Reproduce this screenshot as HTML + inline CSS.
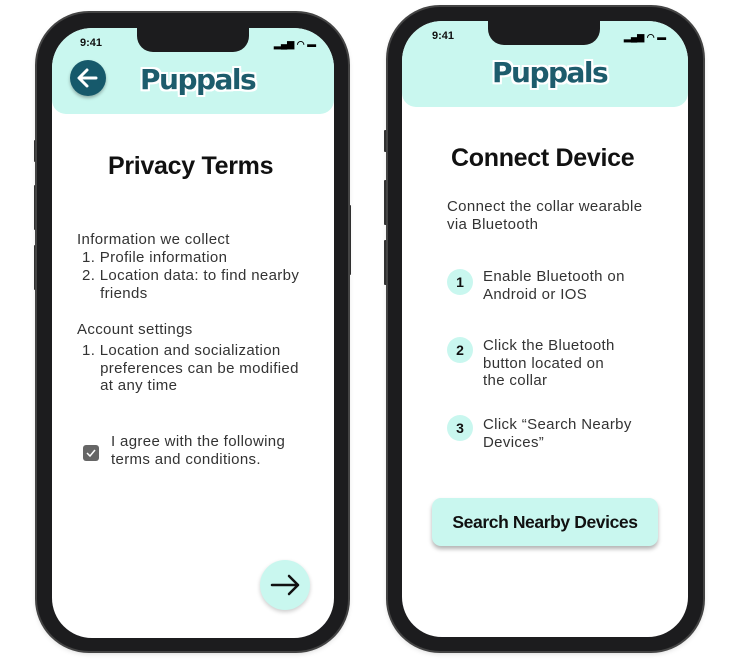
<!DOCTYPE html>
<html><head><style>
*{margin:0;padding:0;box-sizing:border-box}
body{width:738px;height:670px;background:#fff;position:relative;overflow:hidden;font-family:"Liberation Sans",sans-serif}
.ph{position:absolute;background:#1c1c1e;border-radius:52px;box-shadow:0 0 0 2px #444,0 2px 6px rgba(0,0,0,.2)}
.sc{position:absolute;background:#fff;border-radius:40px;overflow:hidden}
.hd{position:absolute;left:0;top:0;right:0;background:#c9f7ef;border-radius:0 0 14px 14px}
.notch{position:absolute;top:0;width:112px;height:24px;background:#1c1c1e;border-radius:0 0 16px 16px}
.time{position:absolute;font-size:11px;font-weight:bold;color:#111}
.logo{position:absolute;font-family:"DejaVu Sans",sans-serif;font-weight:bold;font-size:28px;color:#1d5c6c;letter-spacing:-1.5px;text-shadow:2px 0 #fff,-2px 0 #fff,0 2px #fff,0 -2px #fff,2px 2px #fff,-2px -2px #fff,2px -2px #fff,-2px 2px #fff}
.t{position:absolute;color:#333;font-size:15px;letter-spacing:.35px;line-height:17.5px;white-space:nowrap}
h1{position:absolute;font-family:"Liberation Sans",sans-serif;font-size:25px;font-weight:bold;color:#111;letter-spacing:-.3px}
.num{position:absolute;width:26px;height:26px;border-radius:50%;background:#c9f7ef;font-weight:bold;font-size:14px;text-align:center;line-height:26px;color:#111}
.side{position:absolute;background:#333;width:3px;border-radius:1px}
</style></head><body>
<div class="side" style="left:34px;top:140px;height:22px"></div>
<div class="side" style="left:34px;top:185px;height:45px"></div>
<div class="side" style="left:34px;top:245px;height:45px"></div>
<div class="side" style="left:348px;top:205px;height:70px"></div>
<div class="ph" style="left:37px;top:13px;width:311px;height:638px"></div>
<div class="sc" style="left:52px;top:28px;width:282px;height:610px">
 <div class="hd" style="height:86px"></div>
 <div class="notch" style="left:85px"></div>
 <div class="time" style="left:28px;top:9px">9:41</div>
 <div style="position:absolute;left:222px;top:11px;font-size:9px;font-weight:bold">▂▄▆ ◠ ▬</div>
 <div style="position:absolute;left:18px;top:32px;width:36px;height:36px;border-radius:50%;background:#16596b;box-shadow:0 2px 3px rgba(0,0,0,.3)">
  <svg width="36" height="36" viewBox="0 0 36 36"><path d="M26 18H10M17 10l-8 8 8 8" fill="none" stroke="#fff" stroke-width="3" stroke-linecap="round" stroke-linejoin="round"/></svg></div>
 <div class="logo" style="left:88px;top:35px">Puppals</div>
 <h1 style="left:56px;top:124px">Privacy Terms</h1>
 <div class="t" style="left:25px;top:203px">Information we collect</div>
 <div class="t" style="left:30px;top:221px">1. Profile information</div>
 <div class="t" style="left:30px;top:239px">2. Location data: to find nearby<br>&nbsp;&nbsp;&nbsp;&nbsp;friends</div>
 <div class="t" style="left:25px;top:293px">Account settings</div>
 <div class="t" style="left:30px;top:314px">1. Location and socialization<br>&nbsp;&nbsp;&nbsp;&nbsp;preferences can be modified<br>&nbsp;&nbsp;&nbsp;&nbsp;at any time</div>
 <div style="position:absolute;left:31px;top:417px;width:16px;height:16px;border-radius:3px;background:#666">
  <svg width="16" height="16"><path d="M4 8l3 3 5-6" fill="none" stroke="#fff" stroke-width="1.5"/></svg></div>
 <div class="t" style="left:59px;top:405px">I agree with the following<br>terms and conditions.</div>
 <div style="position:absolute;left:208px;top:532px;width:50px;height:50px;border-radius:50%;background:#c9f7ef;box-shadow:0 2px 4px rgba(0,0,0,.2)">
  <svg width="50" height="50"><path d="M12 25h26M29 16l9 9-9 9" fill="none" stroke="#111" stroke-width="2.5" stroke-linecap="round" stroke-linejoin="round"/></svg></div>
</div>
<div class="side" style="left:384px;top:130px;height:22px"></div>
<div class="side" style="left:384px;top:180px;height:45px"></div>
<div class="side" style="left:384px;top:240px;height:45px"></div>
<div class="side" style="left:702px;top:200px;height:70px"></div>
<div class="ph" style="left:388px;top:7px;width:315px;height:644px"></div>
<div class="sc" style="left:402px;top:21px;width:286px;height:616px">
 <div class="hd" style="height:86px"></div>
 <div class="notch" style="left:86px"></div>
 <div class="time" style="left:30px;top:9px">9:41</div>
 <div style="position:absolute;left:222px;top:11px;font-size:9px;font-weight:bold">▂▄▆ ◠ ▬</div>
 <div class="logo" style="left:90px;top:35px">Puppals</div>
 <h1 style="left:49px;top:123px">Connect Device</h1>
 <div class="t" style="left:45px;top:177px">Connect the collar wearable<br>via Bluetooth</div>
 <div class="num" style="left:45px;top:248px">1</div>
 <div class="t" style="left:81px;top:247px">Enable Bluetooth on<br>Android or IOS</div>
 <div class="num" style="left:45px;top:316px">2</div>
 <div class="t" style="left:81px;top:316px">Click the Bluetooth<br>button located on<br>the collar</div>
 <div class="num" style="left:45px;top:394px">3</div>
 <div class="t" style="left:81px;top:395px">Click “Search Nearby<br>Devices”</div>
 <div style="position:absolute;left:30px;top:477px;width:226px;height:48px;border-radius:9px;background:#c9f7ef;box-shadow:0 3px 4px rgba(0,0,0,.3);font-family:'Liberation Sans',sans-serif;font-weight:bold;font-size:17.5px;letter-spacing:-.4px;line-height:48px;text-align:center;color:#111">Search Nearby Devices</div>
</div>
</body></html>
